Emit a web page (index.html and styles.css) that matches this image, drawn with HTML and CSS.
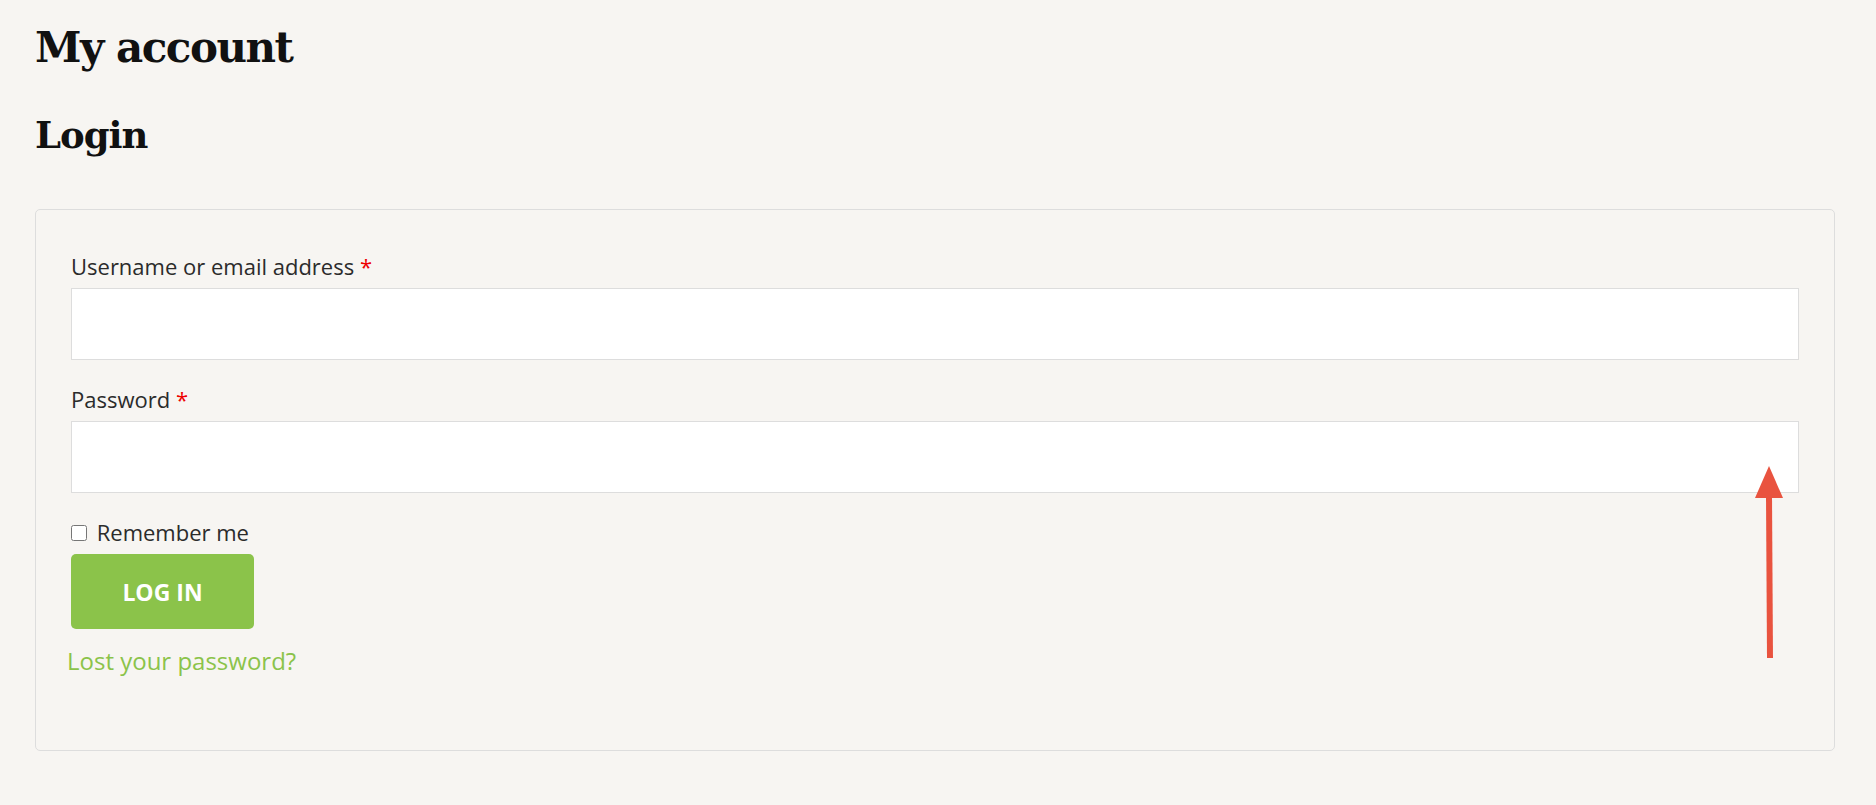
FILE: index.html
```html
<!DOCTYPE html>
<html lang="en">
<head>
    <meta charset="UTF-8">
    <meta name="viewport" content="width=device-width, initial-scale=1.0">
    <title>My account</title>
    <link rel="stylesheet" href="styles.css">
</head>
<body>
    <h1 class="page-title">My account</h1>
    <h2 class="section-title">Login</h2>

    <form class="login-box">
        <p class="form-row">
            <label for="username">Username or email address <span class="required">*</span></label>
            <input type="text" id="username" class="input-text">
        </p>
        <p class="form-row">
            <label for="password">Password <span class="required">*</span></label>
            <input type="password" id="password" class="input-text">
        </p>
        <p class="form-row remember-row">
            <label class="remember"><input type="checkbox" id="rememberme"> Remember me</label>
        </p>
        <button type="button" class="login-button">LOG IN</button>
        <p class="lost-password"><a href="#">Lost your password?</a></p>
    </form>

    <!-- annotation arrow -->
    <svg class="arrow" width="40" height="200" viewBox="0 0 40 200">
        <line x1="16" y1="30" x2="17" y2="193" stroke="#e9533f" stroke-width="6"/>
        <polygon points="16,1 2,33 30,33" fill="#e9533f"/>
    </svg>
</body>
</html>
```

FILE: styles.css
```css
body {
    margin: 0;
    padding: 18px 41px 40px 35px;
    background-color: #f7f5f2;
    color: #2b2b2b;
    font-family: "Open Sans", sans-serif;
    position: relative;
}

.page-title {
    font-family: "DejaVu Serif", serif;
    font-size: 42px;
    letter-spacing: -1.5px;
    font-weight: bold;
    color: #111;
    margin: 0;
    line-height: 60px;
}

.section-title {
    font-family: "DejaVu Serif", serif;
    font-size: 37px;
    letter-spacing: -1px;
    font-weight: bold;
    color: #111;
    margin: 32px 0 0;
    line-height: 50px;
}

.login-box {
    margin-top: 49px;
    border: 1px solid #ddd;
    border-radius: 5px;
    padding: 41px 35px 74px;
}

.form-row {
    margin: 0 0 24px;
}

.form-row label {
    display: block;
    font-size: 22px;
    font-weight: 500;
    line-height: 30px;
    margin-bottom: 7px;
}

.required {
    color: #e00;
}

.input-text {
    display: block;
    box-sizing: border-box;
    width: 100%;
    height: 72px;
    border: 1px solid #ddd;
    background-color: #fff;
    margin: 0;
}

.remember-row {
    margin-bottom: 7px;
}

.remember input {
    width: 16px;
    height: 16px;
    margin: 0 4px 0 0;
}

.login-button {
    width: 183px;
    height: 75px;
    border: none;
    border-radius: 5px;
    background-color: #8bc34a;
    color: #fff;
    font-family: "Open Sans", sans-serif;
    font-size: 23px;
    font-weight: bold;
    cursor: pointer;
}

.lost-password {
    margin: 17px 0 0 -4px;
    font-size: 24px;
    line-height: 30px;
}

.lost-password a {
    color: #8bc34a;
    text-decoration: none;
}

.arrow {
    position: absolute;
    left: 1753px;
    top: 465px;
}
```
